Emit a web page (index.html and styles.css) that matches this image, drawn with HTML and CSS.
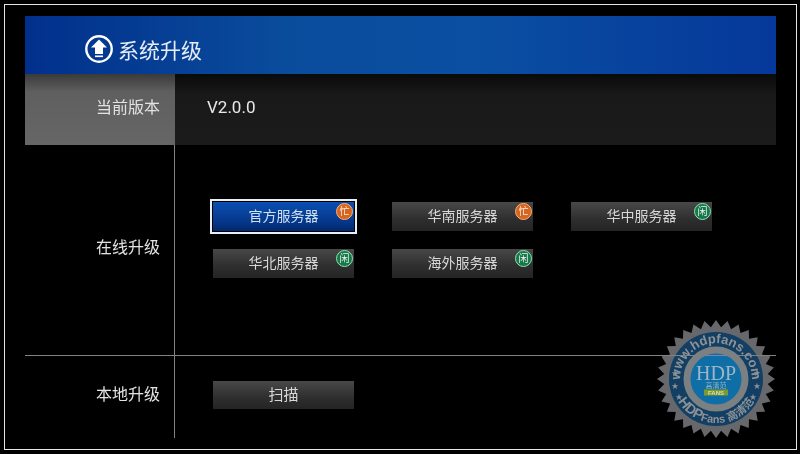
FILE: index.html
```html
<!DOCTYPE html>
<html lang="zh-CN">
<head>
    <meta charset="UTF-8">
    <title>系统升级</title>
    <link rel="stylesheet" href="styles.css">
</head>
<body>
    <div class="frame">
        <header class="title-bar">
            <svg class="title-icon" viewBox="0 0 30 30" width="30" height="30">
                <circle cx="15" cy="15" r="12.7" fill="none" stroke="#fff" stroke-width="2.4"/>
                <path d="M15 5.5 L23 13.5 H19 V20 H11 V13.5 H7 Z" fill="#fff"/>
                <rect x="11" y="21.5" width="8" height="1.6" fill="#fff"/>
            </svg>
            <h1>系统升级</h1>
        </header>

        <section class="row row-version">
            <div class="label label-active">当前版本</div>
            <div class="value">V2.0.0</div>
        </section>

        <section class="row row-online">
            <div class="label">在线升级</div>
            <div class="value">
                <div class="server-grid">
                    <div class="btn btn-focus">官方服务器<span class="badge badge-busy">忙</span></div>
                    <div class="btn">华南服务器<span class="badge badge-busy">忙</span></div>
                    <div class="btn">华中服务器<span class="badge badge-free">闲</span></div>
                    <div class="btn">华北服务器<span class="badge badge-free">闲</span></div>
                    <div class="btn">海外服务器<span class="badge badge-free">闲</span></div>
                </div>
            </div>
        </section>

        <section class="row row-local">
            <div class="label">本地升级</div>
            <div class="value">
                <div class="btn btn-scan">扫描</div>
            </div>
        </section>

        <svg class="stamp" viewBox="-64 -64 128 128" width="128" height="128">
            <defs>
                <path id="arc-top" d="M-34 12 A36 36 0 1 1 34 12"/>
                <path id="arc-bottom" d="M-44 0 A44 44 0 0 0 44 0"/>
            </defs>
            <polygon fill="#66686b" points="0,-59 5.1,-51.8 11.5,-57.9 15.1,-49.8 22.6,-54.5 24.5,-45.9 32.8,-49.1 33,-40.2 41.7,-41.7 40.2,-33 49.1,-32.8 45.9,-24.5 54.5,-22.6 49.8,-15.1 57.9,-11.5 51.8,-5.1 59,0 51.8,5.1 57.9,11.5 49.8,15.1 54.5,22.6 45.9,24.5 49.1,32.8 40.2,33 41.7,41.7 33,40.2 32.8,49.1 24.5,45.9 22.6,54.5 15.1,49.8 11.5,57.9 5.1,51.8 0,59 -5.1,51.8 -11.5,57.9 -15.1,49.8 -22.6,54.5 -24.5,45.9 -32.8,49.1 -33,40.2 -41.7,41.7 -40.2,33 -49.1,32.8 -45.9,24.5 -54.5,22.6 -49.8,15.1 -57.9,11.5 -51.8,5.1 -59,0 -51.8,-5.1 -57.9,-11.5 -49.8,-15.1 -54.5,-22.6 -45.9,-24.5 -49.1,-32.8 -40.2,-33 -41.7,-41.7 -33,-40.2 -32.8,-49.1 -24.5,-45.9 -22.6,-54.5 -15.1,-49.8 -11.5,-57.9 -5.1,-51.8"/>
            <circle r="47" fill="#123f63"/>
            <circle r="29" fill="#0f6ea5" stroke="#7b8083" stroke-width="7"/>
            <text class="stamp-arc" font-size="13"><textPath href="#arc-top" startOffset="50%" text-anchor="middle">www.hdpfans.com</textPath></text>
            <text class="stamp-arc" font-size="11"><textPath href="#arc-bottom" startOffset="50%" text-anchor="middle"><tspan font-size="14">HDP</tspan>Fans 高清范</textPath></text>
            <text class="stamp-star" x="-41" y="-4">★</text>
            <text class="stamp-star" x="41" y="-4">★</text>
            <text class="stamp-star" x="-41" y="9">★</text>
            <text class="stamp-star" x="41" y="9">★</text>
            <text class="stamp-star" x="-37" y="20">★</text>
            <text class="stamp-star" x="37" y="20">★</text>
            <text class="stamp-hdp" y="1" font-size="20">HDP</text>
            <text class="stamp-cn" y="9" font-size="7">高清范</text>
            <rect x="-12" y="10.5" width="24" height="6" fill="#7d9a2a"/>
            <text class="stamp-fans" y="16" font-size="6">FANS</text>
        </svg>
    </div>
</body>
</html>
```

FILE: styles.css
```css
html, body {
    margin: 0;
    padding: 0;
    background: #000;
}

body {
    width: 800px;
    height: 454px;
    overflow: hidden;
    font-family: "Noto Sans CJK SC", "Liberation Sans", sans-serif;
    color: #e8e8e8;
}

.frame {
    position: relative;
    box-sizing: border-box;
    width: 793px;
    height: 446px;
    margin: 4px 0 0 4px;
    padding: 11px 20px 0 20px;
    border: 1px solid #e6e6e6;
    background: #000;
}

.title-bar {
    display: flex;
    align-items: center;
    height: 58px;
    padding: 8px 0 0 59px;
    box-sizing: border-box;
    background: linear-gradient(to right, #01308c 0%, #0a4c9c 35%, #0a4fa2 60%, #05389a 100%);
}

.title-icon {
    margin-right: 4px;
}

.title-bar h1 {
    margin: 0;
    font-size: 21px;
    font-weight: 400;
    color: #e6edf5;
}

.row {
    display: flex;
}

.row-version {
    height: 71px;
}

.row-online {
    height: 210px;
    border-bottom: 1px solid #7f8183;
}

.row-local {
    height: 82px;
}

.label {
    box-sizing: border-box;
    width: 149px;
    padding: 0 14px 8px 0;
    text-align: right;
    font-size: 16px;
    color: #e2e2e2;
    display: flex;
    align-items: center;
    justify-content: flex-end;
}

.label-active {
    width: 150px;
    padding-right: 15px;
    background: linear-gradient(to bottom, #3a3a3a 0%, #5f5f5f 25%, #666 100%);
}

.value {
    flex: 1;
    border-left: 1px solid #7f8183;
}

.row-version .value {
    border-left: 0;
    padding: 0 0 6px 32px;
    display: flex;
    align-items: center;
    font-family: "Roboto", "Liberation Sans", sans-serif;
    font-size: 17px;
    background: linear-gradient(to bottom, #0a0a0a 0%, #191919 30%, #1b1b1b 100%);
}

.server-grid {
    display: grid;
    grid-template-columns: repeat(3, 141px);
    grid-auto-rows: 29px;
    column-gap: 38px;
    row-gap: 18px;
    padding: 57px 0 0 38px;
}

.btn {
    position: relative;
    height: 29px;
    width: 141px;
    display: flex;
    align-items: center;
    justify-content: center;
    box-sizing: border-box;
    padding-bottom: 3px;
    font-size: 14px;
    color: #d8d8d8;
    background: linear-gradient(to bottom, #484848 0%, #2e2e2e 60%, #242424 100%);
}

.btn-focus {
    color: #cfe0f2;
    background: linear-gradient(to bottom, #0a4fb0 0%, #063a90 60%, #02286e 100%);
    outline: 2px solid #e8eef5;
    outline-offset: 1px;
}

.btn-scan {
    height: 28px;
    margin: 25px 0 0 38px;
    font-size: 15px;
}

.badge {
    position: absolute;
    top: 1px;
    right: 1px;
    width: 17px;
    height: 17px;
    box-sizing: border-box;
    border-radius: 50%;
    font-size: 10px;
    line-height: 14px;
    text-align: center;
    color: #f0f0f0;
    border: 1px solid #eee;
}

.badge-busy {
    background: #d9641c;
    border-color: #f0b27c;
}

.badge-free {
    background: #17794a;
    border-color: #8fe0b2;
}

.stamp {
    position: absolute;
    left: 647px;
    top: 310px;
    mix-blend-mode: lighten;
}

.stamp-arc {
    fill: #8d9296;
    font-family: "Liberation Sans", "Noto Sans CJK SC", sans-serif;
    font-weight: 700;
}

.stamp-star {
    fill: #8d9296;
    font-size: 7px;
    text-anchor: middle;
}

.stamp-hdp {
    fill: #9fb6c6;
    font-family: "Liberation Serif", serif;
    text-anchor: middle;
}

.stamp-cn {
    fill: #8fb0c4;
    text-anchor: middle;
}

.stamp-fans {
    fill: #d7dcc0;
    font-family: "Liberation Sans", sans-serif;
    font-weight: 700;
    text-anchor: middle;
}
```
